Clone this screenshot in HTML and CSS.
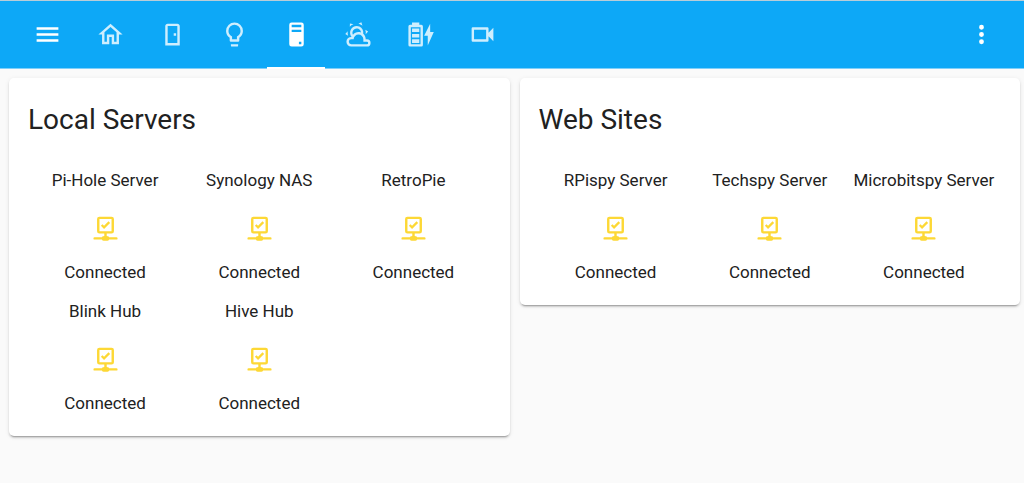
FILE: index.html
```html
<!DOCTYPE html>
<html lang="en">
<head>
<meta charset="utf-8">
<meta name="viewport" content="width=device-width, initial-scale=1">
<title>Servers</title>
<link rel="stylesheet" href="styles.css">
</head>
<body>
<svg class="defs" aria-hidden="true">
  <symbol id="check-network" viewBox="0 0 24 24"><path d="M14.6,19.4Q14.2,19 13,19V17H17A2,2 0 0,0 19,15V5A2,2 0 0,0 17,3H7A2,2 0 0,0 5,5V15A2,2 0 0,0 7,17H11V19Q9.800,19 9.400,19.400L9,20H3A1,1 0 0,0 3,22H9Q9.400,23 10.500,23H13.500Q14.600,23 15,22H21A1,1 0 0,0 21,20H15L14.600,19.400M7,15V5H17V15H7M10.800,13.200L8.200,10.600L9.500,9.300L10.800,10.600L14.500,6.900L15.800,8.200L10.800,13.200Z"/></symbol>
</svg>
<header class="toolbar">
  <button class="icon-button" aria-label="Menu"><svg class="icon" viewBox="0 0 24 24"><path d="M3,6H21V8H3V6M3,11H21V13H3V11M3,16H21V18H3V16Z"/></svg></button>
  <nav class="tabs">
    <a class="tab" href="#home" aria-label="Home"><svg class="icon" viewBox="0 0 24 24"><path d="M12 5.69L17 10.19V18H15V12H9V18H7V10.19L12 5.69M12 3L2 12H5V20H11V14H13V20H19V12H22L12 3Z"/></svg></a>
    <a class="tab" href="#doors" aria-label="Doors"><svg class="icon" viewBox="0 0 24 24"><path d="M8,3C6.89,3 6,3.89 6,5V21H18V5C18,3.89 17.11,3 16,3H8M8,5H16V19H8V5M13,11V13H15V11H13Z"/></svg></a>
    <a class="tab" href="#lights" aria-label="Lights"><svg class="icon" viewBox="0 0 24 24"><path d="M12,2A7,7 0 0,1 19,9C19,11.38 17.81,13.47 16,14.74V17A1,1 0 0,1 15,18H9A1,1 0 0,1 8,17V14.74C6.19,13.47 5,11.38 5,9A7,7 0 0,1 12,2M9,21V20H15V21A1,1 0 0,1 14,22H10A1,1 0 0,1 9,21M12,4A5,5 0 0,0 7,9C7,11.05 8.23,12.81 10,13.58V16H14V13.58C15.77,12.81 17,11.05 17,9A5,5 0 0,0 12,4Z"/></svg></a>
    <a class="tab tab-active" href="#servers" aria-label="Servers" aria-current="page"><svg class="icon" viewBox="0 0 24 24"><path d="M8,2H16A2,2 0 0,1 18,4V20A2,2 0 0,1 16,22H8A2,2 0 0,1 6,20V4A2,2 0 0,1 8,2M8,4V6H16V4H8M16,8H8V10H16V8M16,18H14V20H16V18Z"/></svg></a>
    <a class="tab" href="#weather" aria-label="Weather"><svg class="icon" viewBox="0 0 24 24"><path d="M12.74,5.47C15.1,6.5 16.35,9.03 15.92,11.46C17.19,12.56 18,14.19 18,16V16.17C18.31,16.06 18.65,16 19,16A3,3 0 0,1 22,19A3,3 0 0,1 19,22H6A4,4 0 0,1 2,18A4,4 0 0,1 6,14H6.27C5,12.45 4.6,10.24 5.5,8.26C6.72,5.5 9.97,4.24 12.74,5.47M11.93,7.3C10.16,6.5 8.09,7.31 7.31,9.07C6.85,10.09 6.93,11.22 7.41,12.13C8.5,10.83 10.16,10 12,10C12.7,10 13.38,10.12 14,10.34C13.94,9.06 13.18,7.86 11.93,7.3M13.55,3.64C13,3.4 12.45,3.23 11.88,3.12L14.37,1.82L15.27,4.71C14.76,4.29 14.19,3.93 13.55,3.64M6.09,4.44C5.6,4.79 5.17,5.19 4.8,5.63L4.91,2.82L7.87,3.5C7.25,3.71 6.65,4.03 6.09,4.44M18,9.71C17.91,9.12 17.78,8.55 17.59,8L19.97,9.5L17.92,11.73C18.03,11.08 18.05,10.4 18,9.71M3.04,11.3C3.11,11.9 3.24,12.47 3.43,13L1.06,11.5L3.1,9.28C3,9.93 2.97,10.61 3.04,11.3M19,18H16V16A4,4 0 0,0 12,12A4,4 0 0,0 8,16H6A2,2 0 0,0 4,18A2,2 0 0,0 6,20H19A1,1 0 0,0 20,19A1,1 0 0,0 19,18Z"/></svg></a>
    <a class="tab" href="#batteries" aria-label="Batteries"><svg class="icon" viewBox="0 0 24 24"><path d="M12,20H4V6H12M12.67,4H11V2H5V4H3.33A1.33,1.33 0 0,0 2,5.33V20.67A1.33,1.33 0 0,0 3.33,22H12.67A1.33,1.33 0 0,0 14,20.67V5.33A1.33,1.33 0 0,0 12.67,4M11,16H5V19H11V16M11,7H5V10H11V7M11,11.5H5V14.5H11V11.5M23,10H20V3L15,13H18V21"/></svg></a>
    <a class="tab" href="#cameras" aria-label="Cameras"><svg class="icon" viewBox="0 0 24 24"><path d="M15,8V16H5V8H15M16,6H4A1,1 0 0,0 3,7V17A1,1 0 0,0 4,18H16A1,1 0 0,0 17,17V13.5L21,17.5V6.5L17,10.5V7A1,1 0 0,0 16,6Z"/></svg></a>
  </nav>
  <button class="icon-button" aria-label="More options"><svg class="icon" viewBox="0 0 24 24"><path d="M12,16A2,2 0 0,1 14,18A2,2 0 0,1 12,20A2,2 0 0,1 10,18A2,2 0 0,1 12,16M12,10A2,2 0 0,1 14,12A2,2 0 0,1 12,14A2,2 0 0,1 10,12A2,2 0 0,1 12,10M12,4A2,2 0 0,1 14,6A2,2 0 0,1 12,8A2,2 0 0,1 10,6A2,2 0 0,1 12,4Z"/></svg></button>
</header>
<main class="board">
  <section class="card">
    <h2 class="card-title">Local Servers</h2>
    <div class="glance">
      <div class="entity"><span>Pi-Hole Server</span><svg class="icon state-icon"><use href="#check-network"/></svg><span>Connected</span></div>
      <div class="entity"><span>Synology NAS</span><svg class="icon state-icon"><use href="#check-network"/></svg><span>Connected</span></div>
      <div class="entity"><span>RetroPie</span><svg class="icon state-icon"><use href="#check-network"/></svg><span>Connected</span></div>
      <div class="entity"><span>Blink Hub</span><svg class="icon state-icon"><use href="#check-network"/></svg><span>Connected</span></div>
      <div class="entity"><span>Hive Hub</span><svg class="icon state-icon"><use href="#check-network"/></svg><span>Connected</span></div>
    </div>
  </section>
  <section class="card">
    <h2 class="card-title">Web Sites</h2>
    <div class="glance">
      <div class="entity"><span>RPispy Server</span><svg class="icon state-icon"><use href="#check-network"/></svg><span>Connected</span></div>
      <div class="entity"><span>Techspy Server</span><svg class="icon state-icon"><use href="#check-network"/></svg><span>Connected</span></div>
      <div class="entity"><span>Microbitspy Server</span><svg class="icon state-icon"><use href="#check-network"/></svg><span>Connected</span></div>
    </div>
  </section>
</main>
</body>
</html>
```
FILE: styles.css
```css
* {
  box-sizing: border-box;
}

body {
  margin: 0;
  background: #fafafa;
  color: #212121;
  font-family: Roboto, "Liberation Sans", sans-serif;
  font-size: 17px;
  line-height: 24px;
}

.defs {
  display: none;
}

.icon {
  display: block;
  width: 29px;
  height: 29px;
  fill: currentColor;
}

.toolbar {
  display: flex;
  align-items: stretch;
  justify-content: space-between;
  height: 69px;
  padding: 0 28px 0 33px;
  border-top: 1px solid #b9cdd8;
  border-bottom: 1px solid #7fcffa;
  background: #0da8f7;
  color: #fff;
}

.icon-button {
  padding: 0;
  border: 0;
  background: none;
  color: inherit;
  cursor: pointer;
}

.tabs {
  display: flex;
  flex: 1;
  gap: 4px;
  margin-bottom: -1px;
  padding-left: 19px;
}

.tab {
  display: flex;
  align-items: center;
  justify-content: center;
  width: 58px;
  border-bottom: 2px solid transparent;
  color: rgba(255, 255, 255, 0.8);
}

.tab-active {
  border-bottom-color: #fff;
  color: #fff;
}

.board {
  display: grid;
  grid-template-columns: 1fr 1fr;
  align-items: start;
  gap: 10px;
  padding: 9px 4px 9px 9px;
}

.card {
  padding: 24px 19px 21px;
  border-radius: 5px;
  background: #fff;
  box-shadow: 0 2px 2px rgba(0, 0, 0, 0.14), 0 1px 5px rgba(0, 0, 0, 0.08), 0 3px 1px -2px rgba(0, 0, 0, 0.2);
}

.card-title {
  margin: 0 0 30px;
  font-size: 28px;
  font-weight: 400;
  line-height: 36px;
}

.glance {
  display: grid;
  grid-template-columns: repeat(3, 1fr);
  row-gap: 15px;
}

.entity {
  display: flex;
  flex-direction: column;
  align-items: center;
  white-space: nowrap;
}

.state-icon {
  margin: 21px 0 18px;
  color: #fdd835;
}
```
